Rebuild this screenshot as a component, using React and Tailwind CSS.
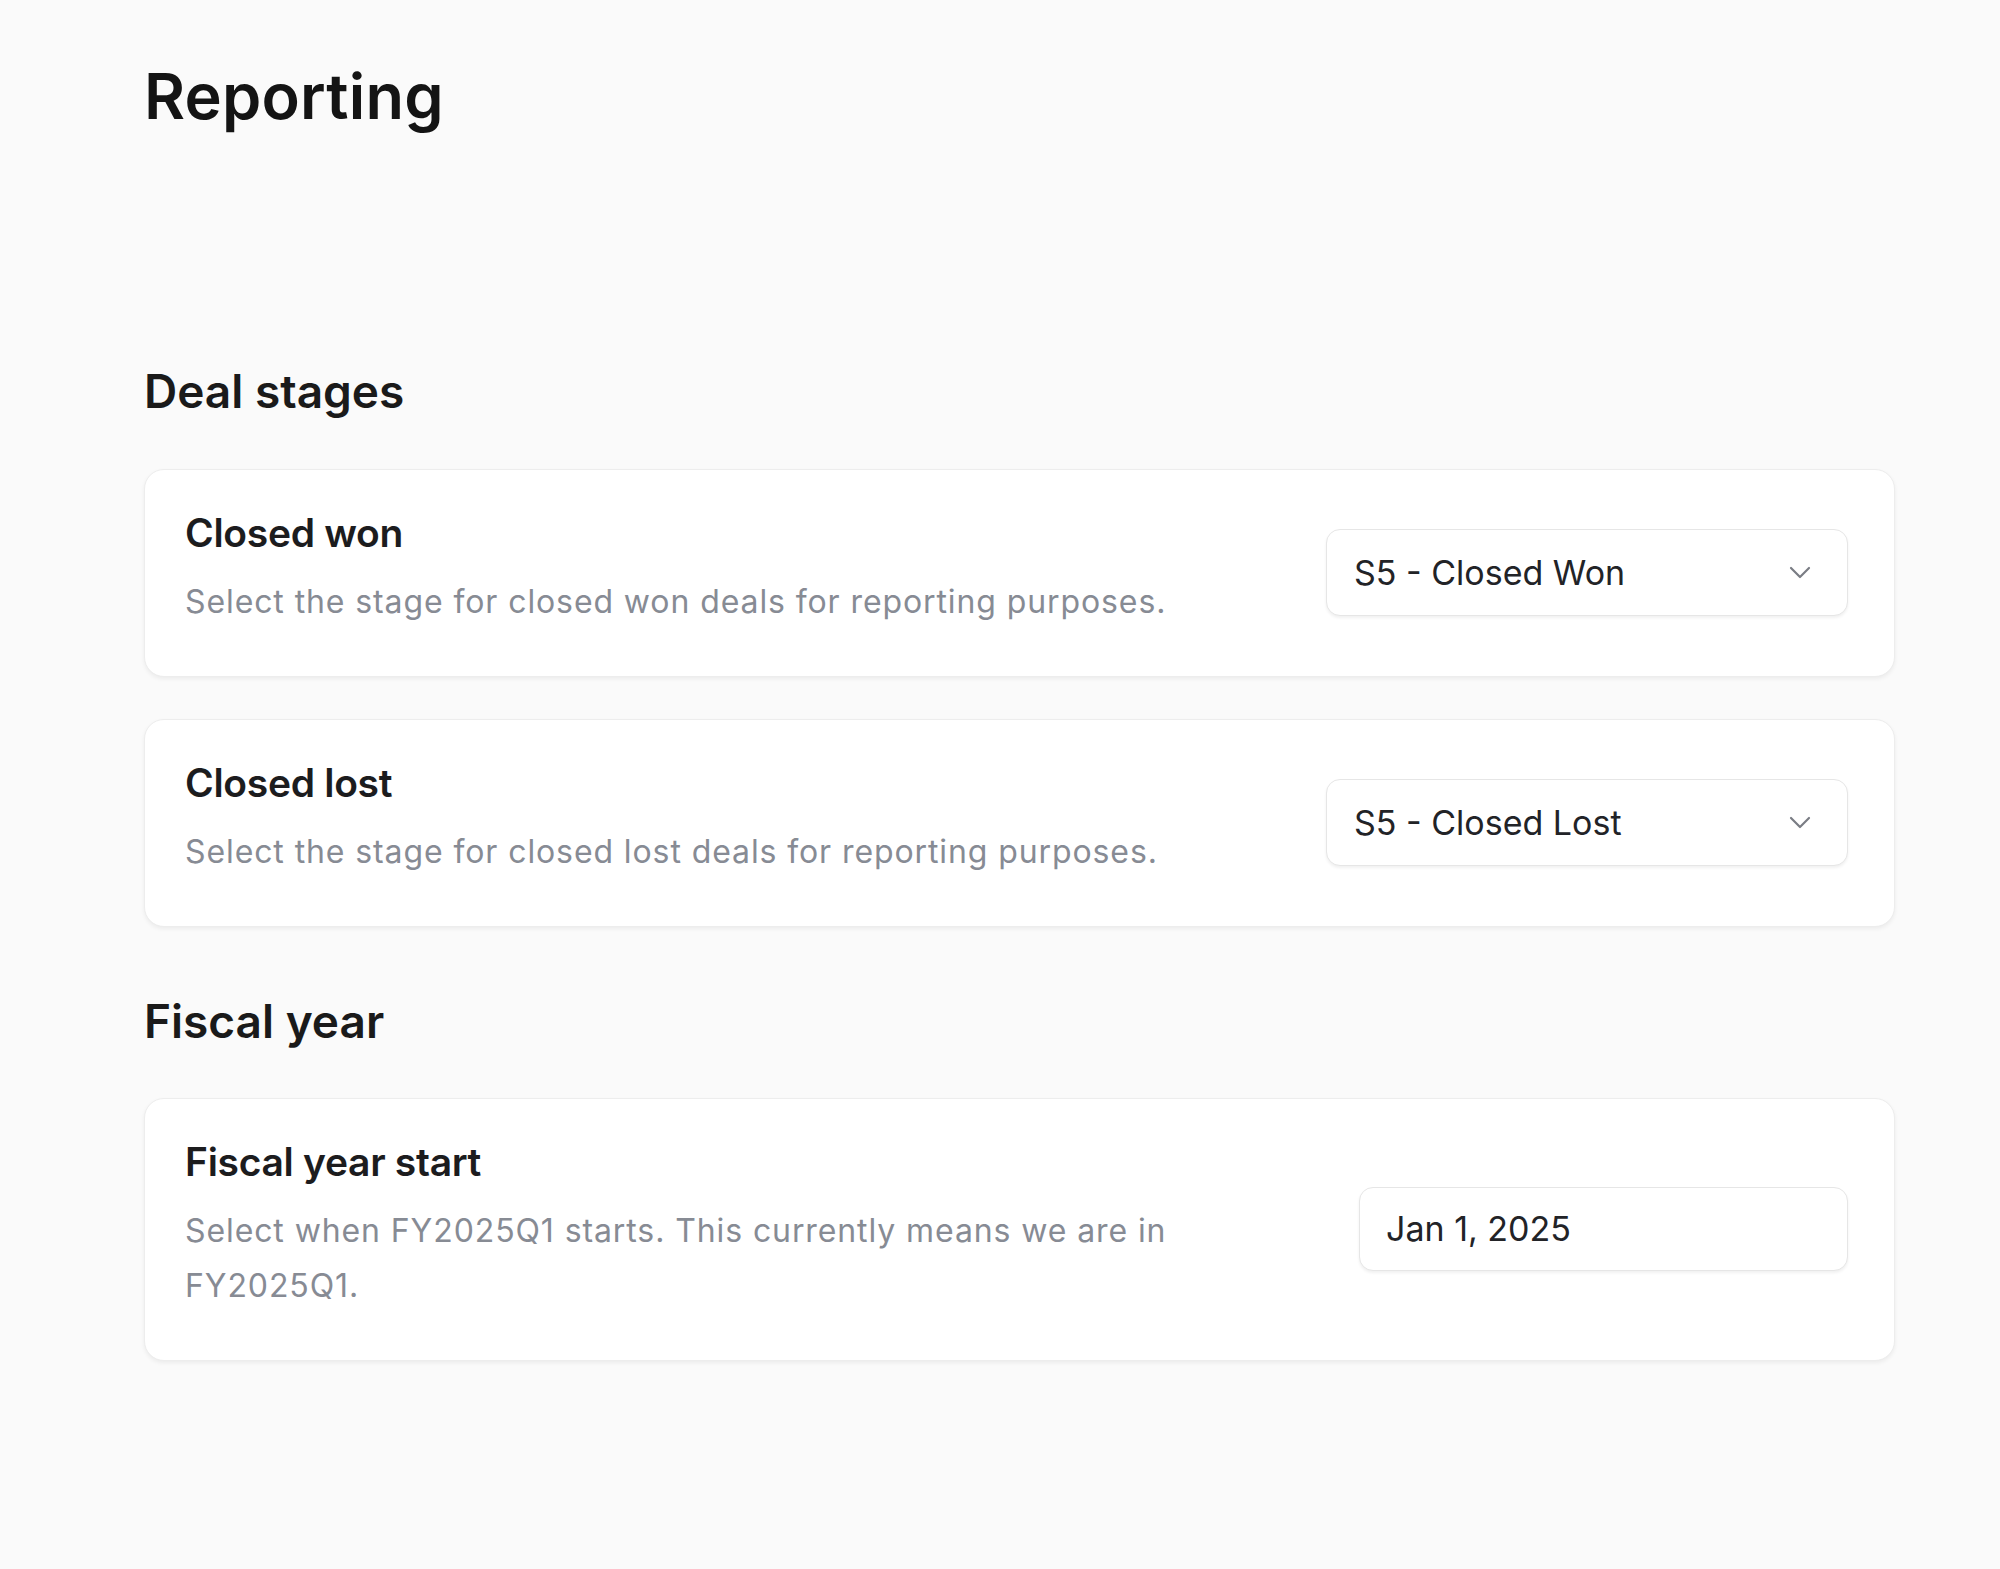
import React from "react";

const Chevron = () => (
  <svg width="22" height="13" viewBox="0 0 22 13" fill="none" className="shrink-0">
    <path d="M2 2l9 9 9-9" stroke="#7a7d84" strokeWidth="2.2" strokeLinecap="round" strokeLinejoin="round" />
  </svg>
);

const SettingCard = ({ title, description, children }) => (
  <div className="flex items-center justify-between rounded-[20px] border border-[#ededed] bg-white pl-[40px] pr-[46px] pt-[37px] pb-[47px] shadow-[0_2px_4px_rgba(0,0,0,0.06)]">
    <div className="max-w-[1060px]">
      <div className="text-[39px] leading-[52px] font-semibold text-[#1c1c1e] tracking-[-0.3px]">{title}</div>
      <div className="mt-[15px] text-[32px] leading-[55px] text-[#878b94] tracking-[0.9px]">{description}</div>
    </div>
    <div className="mt-[8px]">{children}</div>
  </div>
);

const Select = ({ value }) => (
  <div className="flex h-[87px] w-[522px] items-center justify-between rounded-[14px] border border-[#e6e6e6] bg-white pl-[27px] pr-[36px] shadow-[0_2px_3px_rgba(0,0,0,0.06)]">
    <span className="text-[34px] text-[#222327]">{value}</span>
    <Chevron />
  </div>
);

const DateInput = ({ value }) => (
  <div className="flex h-[84px] w-[489px] items-center rounded-[14px] border border-[#e6e6e6] bg-white pl-[26px] shadow-[0_2px_3px_rgba(0,0,0,0.06)]">
    <span className="text-[34px] text-[#222327]">{value}</span>
  </div>
);

export default function App() {
  return (
    <div
      className="min-h-[1569px] w-full bg-[#fafafa] pl-[144px] pr-[105px] pt-[65px]"
      style={{ fontFamily: "Inter, 'Noto Sans', sans-serif" }}
    >
      <h1 className="text-[63px] leading-none font-semibold text-[#141414] tracking-[0.2px]">Reporting</h1>

      <section className="mt-[240px]">
        <h2 className="text-[46px] leading-none font-semibold text-[#1a1a1a]">Deal stages</h2>
        <div className="mt-[55px] flex flex-col gap-[42px]">
          <SettingCard
            title="Closed won"
            description="Select the stage for closed won deals for reporting purposes."
          >
            <Select value="S5 - Closed Won" />
          </SettingCard>
          <SettingCard
            title="Closed lost"
            description="Select the stage for closed lost deals for reporting purposes."
          >
            <Select value="S5 - Closed Lost" />
          </SettingCard>
        </div>
      </section>

      <section className="mt-[71px]">
        <h2 className="text-[46px] leading-none font-semibold text-[#1a1a1a]">Fiscal year</h2>
        <div className="mt-[54px]">
          <SettingCard
            title="Fiscal year start"
            description="Select when FY2025Q1 starts. This currently means we are in FY2025Q1."
          >
            <DateInput value="Jan 1, 2025" />
          </SettingCard>
        </div>
      </section>
    </div>
  );
}
